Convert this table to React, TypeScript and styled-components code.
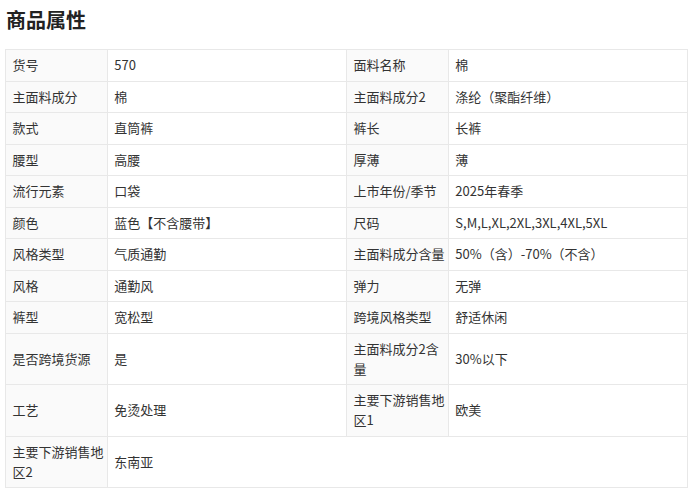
import React from "react";
import styled, { createGlobalStyle } from "styled-components";

const GlobalStyle = createGlobalStyle`
  html, body {
    margin: 0;
    padding: 0;
    background: #ffffff;
  }
  body {
    font-family: "Noto Sans CJK SC", "Noto Sans", sans-serif;
    color: #333333;
  }
`;

const Page = styled.div`
  padding: 0 7px 0 5px;
  width: 695px;
  box-sizing: border-box;
`;

const Title = styled.h3`
  margin: 0;
  padding: 6px 0 15px 1px;
  font-size: 20px;
  line-height: 28px;
  font-weight: 700;
  color: #222222;
`;

const Table = styled.table`
  width: 100%;
  border-collapse: collapse;
  table-layout: fixed;
  font-size: 13px;
  line-height: 20px;
`;

const Col = styled.col<{ $wide?: boolean }>`
  width: ${(p) => (p.$wide ? "35%" : "15%")};
`;

const Label = styled.th`
  background: #fafafa;
  border: 1px solid #e8e8e8;
  padding: 5.25px 3px 5.25px 6.5px;
  text-align: left;
  font-weight: 400;
  color: #333333;
  vertical-align: middle;
  word-break: break-all;
`;

const Value = styled.td`
  border: 1px solid #e8e8e8;
  padding: 5.25px 6px;
  color: #333333;
  vertical-align: middle;
  word-break: break-all;
`;

type Pair = [string, string];

const rows: Pair[][] = [
  [["货号", "570"], ["面料名称", "棉"]],
  [["主面料成分", "棉"], ["主面料成分2", "涤纶（聚酯纤维）"]],
  [["款式", "直筒裤"], ["裤长", "长裤"]],
  [["腰型", "高腰"], ["厚薄", "薄"]],
  [["流行元素", "口袋"], ["上市年份/季节", "2025年春季"]],
  [["颜色", "蓝色【不含腰带】"], ["尺码", "S,M,L,XL,2XL,3XL,4XL,5XL"]],
  [["风格类型", "气质通勤"], ["主面料成分含量", "50%（含）-70%（不含）"]],
  [["风格", "通勤风"], ["弹力", "无弹"]],
  [["裤型", "宽松型"], ["跨境风格类型", "舒适休闲"]],
  [["是否跨境货源", "是"], ["主面料成分2含量", "30%以下"]],
  [["工艺", "免烫处理"], ["主要下游销售地区1", "欧美"]],
  [["主要下游销售地区2", "东南亚"]],
];

export default function App() {
  return (
    <Page>
      <GlobalStyle />
      <Title>商品属性</Title>
      <Table>
        <colgroup>
          <Col />
          <Col $wide />
          <Col />
          <Col $wide />
        </colgroup>
        <tbody>
          {rows.map((row, i) => (
            <tr key={i}>
              {row.map(([k, v], j) => (
                <React.Fragment key={j}>
                  <Label>{k}</Label>
                  <Value colSpan={row.length === 1 ? 3 : 1}>{v}</Value>
                </React.Fragment>
              ))}
            </tr>
          ))}
        </tbody>
      </Table>
    </Page>
  );
}
